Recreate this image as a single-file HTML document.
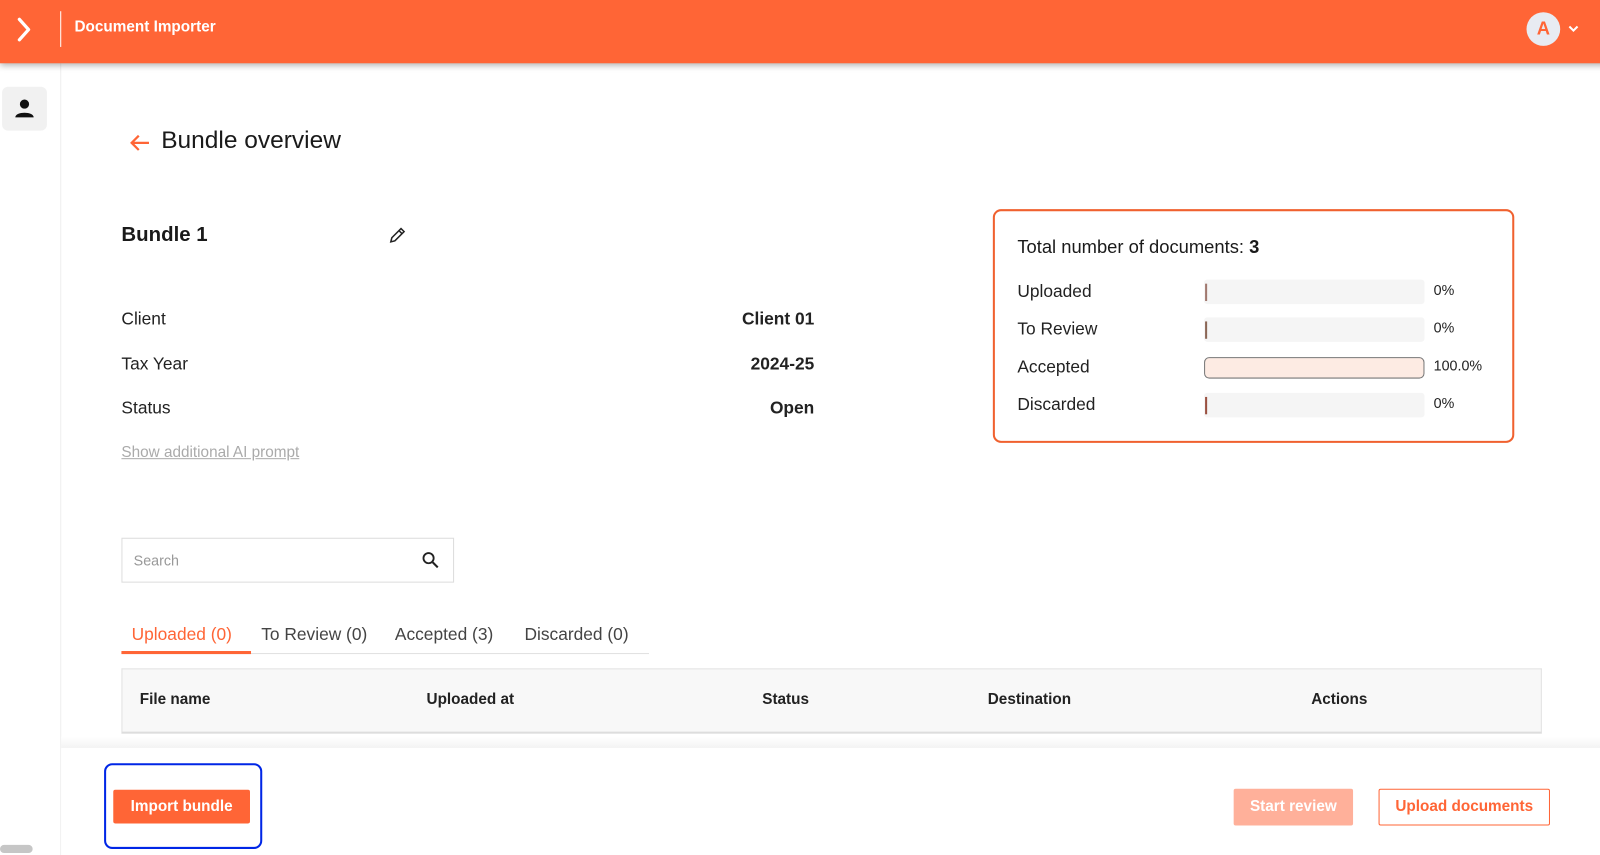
<!DOCTYPE html>
<html><head><meta charset="utf-8"><style>
*{box-sizing:border-box;margin:0;padding:0}
html,body{width:1600px;height:855px;overflow:hidden;background:#fff}
body{font-family:"Liberation Sans",sans-serif;color:#1a1a1a;position:relative}
#w{position:absolute;left:0;top:0;width:1568px;height:838px;transform:scale(1.0204);transform-origin:0 0}
.abs{position:absolute}
.hdr{left:0;top:0;width:1600px;height:62px;background:#ff6536;box-shadow:0 2px 6px rgba(0,0,0,.3);z-index:5}
.side{left:0;top:62px;width:60px;height:793px;background:#fff;border-right:1px solid #eee}
.bar{height:24px;background:#f5f5f5;border-radius:3px}
.lbl{font-size:17px;color:#222}
.pct{font-size:14px;color:#222}
.th{font-size:15px;font-weight:bold;color:#222;top:677px}
</style></head><body><div id="w">
<div class="abs hdr">
  <svg class="abs" style="left:16px;top:16px" width="16" height="26" viewBox="0 0 16 26"><path d="M3 3 L12 13 L3 23" stroke="#fff" stroke-width="3.2" fill="none" stroke-linecap="round" stroke-linejoin="round"/></svg>
  <div class="abs" style="left:59px;top:11px;width:1px;height:35px;background:#fff"></div>
  <div class="abs" style="left:73px;top:18px;color:#fff;font-size:15px;font-weight:bold">Document Importer</div>
  <div class="abs" style="left:1496px;top:12px;width:33px;height:33px;border-radius:50%;background:#e8ebf2;color:#ff6536;font-weight:bold;font-size:18px;text-align:center;line-height:33px">A</div>
  <svg class="abs" style="left:1536px;top:23px" width="12" height="10" viewBox="0 0 12 10"><path d="M2 3 L6 7 L10 3" stroke="#fff" stroke-width="2" fill="none"/></svg>
</div>
<div class="abs side">
  <div class="abs" style="left:2px;top:23px;width:44px;height:43px;background:#f1f1f1;border-radius:6px"></div>
  <svg class="abs" style="left:13px;top:34px" width="22" height="20" viewBox="0 0 22 20"><circle cx="11" cy="6" r="4.5" fill="#111"/><path d="M2 19 C2 13 20 13 20 19 Z" fill="#111"/></svg>
</div>
<div class="abs" style="left:0;top:828px;width:32px;height:8px;background:#c6c6c6;border-radius:4px"></div>

<svg class="abs" style="left:126px;top:130px" width="22" height="20" viewBox="0 0 22 20"><path d="M20 10 H3 M10 3 L3 10 L10 17" stroke="#ff6536" stroke-width="2.2" fill="none"/></svg>
<div class="abs" style="left:158px;top:124px;font-size:24px;color:#1a1a1a">Bundle overview</div>

<div class="abs" style="left:119px;top:219px;font-size:20px;font-weight:bold">Bundle 1</div>
<svg class="abs" style="left:380px;top:222px" width="18" height="18" viewBox="0 0 18 18"><path d="M3 15 L4 11 L13 2 L16 5 L7 14 Z M11 4 L14 7" stroke="#222" stroke-width="1.5" fill="none"/></svg>

<div class="abs lbl" style="left:119px;top:303px">Client</div>
<div class="abs lbl" style="left:119px;top:347px">Tax Year</div>
<div class="abs lbl" style="left:119px;top:390px">Status</div>
<div class="abs lbl" style="left:600px;width:198px;text-align:right;top:303px;font-weight:bold">Client 01</div>
<div class="abs lbl" style="left:600px;width:198px;text-align:right;top:347px;font-weight:bold">2024-25</div>
<div class="abs lbl" style="left:600px;width:198px;text-align:right;top:390px;font-weight:bold">Open</div>
<div class="abs" style="left:119px;top:435px;font-size:15px;color:#aaa;text-decoration:underline">Show additional AI prompt</div>

<div class="abs" style="left:973px;top:205px;width:511px;height:229px;border:2px solid #f0612f;border-radius:8px">
  <div class="abs" style="left:22px;top:25px;font-size:18px">Total number of documents: <b>3</b></div>
  <div class="abs lbl" style="left:22px;top:69px">Uploaded</div>
  <div class="abs lbl" style="left:22px;top:106px">To Review</div>
  <div class="abs lbl" style="left:22px;top:143px">Accepted</div>
  <div class="abs lbl" style="left:22px;top:180px">Discarded</div>
  <div class="abs bar" style="left:205px;top:67px;width:216px"><div style="position:absolute;left:1px;top:4px;width:2px;height:17px;background:#a0786e"></div></div>
  <div class="abs bar" style="left:205px;top:104px;width:216px"><div style="position:absolute;left:1px;top:4px;width:2px;height:17px;background:#8b6655"></div></div>
  <div class="abs" style="left:205px;top:143px;width:216px;height:21px;background:#fdebe3;border:1px solid #777;border-radius:5px"></div>
  <div class="abs bar" style="left:205px;top:178px;width:216px"><div style="position:absolute;left:1px;top:4px;width:2px;height:17px;background:#9a5040"></div></div>
  <div class="abs pct" style="left:430px;top:69px">0%</div>
  <div class="abs pct" style="left:430px;top:106px">0%</div>
  <div class="abs pct" style="left:430px;top:143px">100.0%</div>
  <div class="abs pct" style="left:430px;top:180px">0%</div>
</div>

<div class="abs" style="left:119px;top:527px;width:326px;height:44px;border:1px solid #ddd"></div>
<div class="abs" style="left:131px;top:541px;font-size:14px;color:#999">Search</div>
<svg class="abs" style="left:413px;top:540px" width="18" height="18" viewBox="0 0 18 18"><circle cx="7" cy="7" r="5" stroke="#222" stroke-width="1.8" fill="none"/><path d="M11 11 L16 16" stroke="#222" stroke-width="2"/></svg>

<div class="abs" style="left:119px;top:640px;width:517px;height:1px;background:#e0e0e0"></div>
<div class="abs" style="left:119px;top:638px;width:127px;height:3px;background:#ff6536"></div>
<div class="abs" style="left:129px;top:612px;font-size:17px;color:#ff6536">Uploaded (0)</div>
<div class="abs" style="left:256px;top:612px;font-size:17px;color:#444">To Review (0)</div>
<div class="abs" style="left:387px;top:612px;font-size:17px;color:#444">Accepted (3)</div>
<div class="abs" style="left:514px;top:612px;font-size:17px;color:#444">Discarded (0)</div>

<div class="abs" style="left:119px;top:655px;width:1392px;height:64px;background:#f8f8f8;border:1px solid #e2e2e2;border-bottom:2px solid #ddd"></div>
<div class="abs th" style="left:137px">File name</div>
<div class="abs th" style="left:418px">Uploaded at</div>
<div class="abs th" style="left:747px">Status</div>
<div class="abs th" style="left:968px">Destination</div>
<div class="abs th" style="left:1285px">Actions</div>

<div class="abs" style="left:60px;top:722px;width:1540px;height:12px;background:linear-gradient(#fff,#f2f2f2)"></div>
<div class="abs" style="left:60px;top:733px;width:1540px;height:122px;background:#fff"></div>
<div class="abs" style="left:102px;top:748px;width:155px;height:84px;border:2px solid #0026e6;border-radius:8px"></div>
<div class="abs" style="left:111px;top:774px;width:134px;height:33px;background:#ff6536;border-radius:2px;color:#fff;font-size:15px;font-weight:bold;text-align:center;line-height:33px">Import bundle</div>
<div class="abs" style="left:1209px;top:773px;width:117px;height:36px;background:#ffb09a;border-radius:2px;color:#fff;font-size:15px;font-weight:bold;text-align:center;line-height:36px">Start review</div>
<div class="abs" style="left:1351px;top:773px;width:168px;height:36px;border:1px solid #ff6536;border-radius:2px;color:#ff6536;font-size:15px;font-weight:bold;text-align:center;line-height:34px">Upload documents</div>
</div></body></html>
